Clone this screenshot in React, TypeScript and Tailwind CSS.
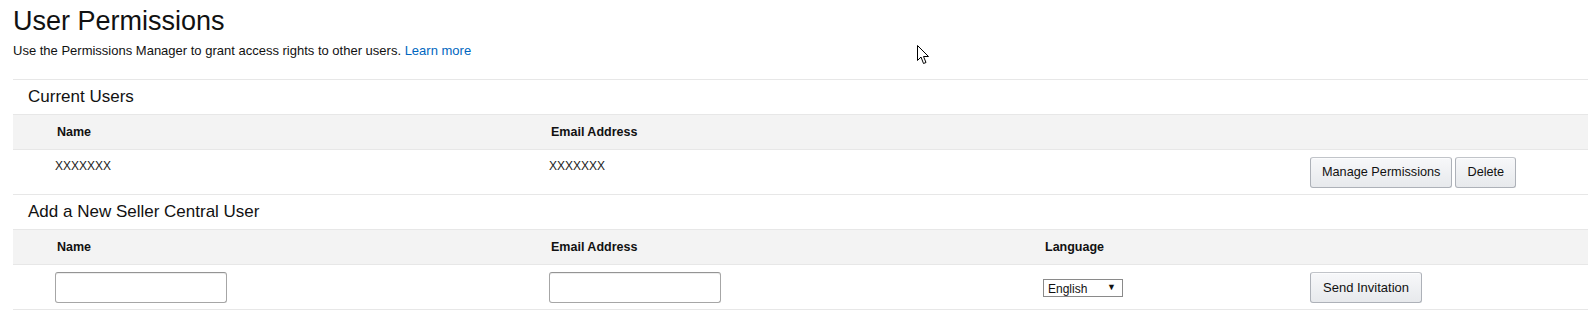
import React from "react";

const font = { fontFamily: '"Liberation Sans", Arial, sans-serif' };

function Button({ children, tight }: { children: React.ReactNode; tight?: boolean }) {
  return (
    <button
      className={
        tight
          ? "h-[31px] px-[11px] rounded-[3px] border border-[#adb1b8] border-t-[#c1c4c9] bg-gradient-to-b from-[#f7f8fa] to-[#e7e9ec] text-[12.7px] text-[#111] shadow-[0_1px_0_rgba(255,255,255,0.6)_inset]"
          : "h-[31px] px-[12px] rounded-[3px] border border-[#adb1b8] border-t-[#c1c4c9] bg-gradient-to-b from-[#f7f8fa] to-[#e7e9ec] text-[13px] text-[#111] shadow-[0_1px_0_rgba(255,255,255,0.6)_inset]"
      }
    >
      {children}
    </button>
  );
}

function TextInput() {
  return (
    <input
      type="text"
      className="w-[172px] h-[31px] rounded-[3px] border border-[#a6a6a6] border-t-[#949494] bg-white px-2 text-[13px] shadow-[0_1px_0_rgba(255,255,255,0.5),0_1px_0_rgba(0,0,0,0.07)_inset] focus:outline-none"
    />
  );
}

function HeaderRow({ cols }: { cols: string[] }) {
  return (
    <div className="h-[36px] bg-[#f3f3f3] border-y border-[#e7e7e7] grid grid-cols-[494px_494px_267px_1fr] pl-[44px] items-center">
      {cols.map((c) => (
        <div key={c} className="text-[12.5px] font-bold text-[#111]">
          {c}
        </div>
      ))}
    </div>
  );
}

function SectionTitle({ children }: { children: React.ReactNode }) {
  return (
    <h2 className="mt-[5px] mb-[5px] h-[24px] leading-[24px] pl-[15px] text-[17px] text-[#111]">
      {children}
    </h2>
  );
}

export default function App() {
  return (
    <div className="relative min-h-[336px] bg-white text-[#111]" style={font}>
      <div className="pl-[13px] pt-[6px]">
        <h1 className="text-[27px] leading-[30px] h-[30px] text-[#111]">User Permissions</h1>
        <p className="mt-[6px] text-[13px] leading-[18px]">
          Use the Permissions Manager to grant access rights to other users.{" "}
          <a href="#" className="text-[#0066c0]">
            Learn more
          </a>
        </p>

        <div className="mt-[19px] border-t border-[#e7e7e7]">
          {/* Current users */}
          <SectionTitle>Current Users</SectionTitle>
          <HeaderRow cols={["Name", "Email Address"]} />
          <div className="h-[45px] border-b border-[#e7e7e7] grid grid-cols-[494px_494px_267px_1fr] pl-[42px]">
            <div className="pt-[7px] text-[12px] leading-[18px] text-[#222]">XXXXXXX</div>
            <div className="pt-[7px] text-[12px] leading-[18px] text-[#222]">XXXXXXX</div>
            <div />
            <div className="pt-[7px] flex gap-[3px]">
              <Button tight>Manage Permissions</Button>
              <Button tight>Delete</Button>
            </div>
          </div>

          {/* Add new user */}
          <SectionTitle>Add a New Seller Central User</SectionTitle>
          <HeaderRow cols={["Name", "Email Address", "Language"]} />
          <div className="h-[45px] border-b border-[#e7e7e7] grid grid-cols-[494px_494px_267px_1fr] pl-[42px]">
            <div className="pt-[7px]">
              <TextInput />
            </div>
            <div className="pt-[7px]">
              <TextInput />
            </div>
            <div className="pt-[14px]">
              <div className="relative w-[80px] h-[18px]">
                <select className="appearance-none block w-full h-full border border-[#8a8a8a] bg-white pl-[4px] py-0 text-[12px] text-[#111] rounded-none focus:outline-none">
                  <option>English</option>
                </select>
                <span className="pointer-events-none absolute right-[7px] top-0 h-full flex items-center text-[9px] text-[#111]">
                  ▼
                </span>
              </div>
            </div>
            <div className="pt-[7px]">
              <Button>Send Invitation</Button>
            </div>
          </div>
        </div>
      </div>

      {/* mouse pointer */}
      <svg
        className="absolute left-[917px] top-[45px]"
        width="13"
        height="20"
        viewBox="0 0 13 20"
      >
        <path
          d="M0.5 0.5 L0.5 15.5 L4 12 L6.5 18.5 L9 17.5 L6.5 11.5 L11.5 11.5 Z"
          fill="#fff"
          stroke="#000"
          strokeWidth="1"
          strokeLinejoin="round"
        />
      </svg>
    </div>
  );
}
